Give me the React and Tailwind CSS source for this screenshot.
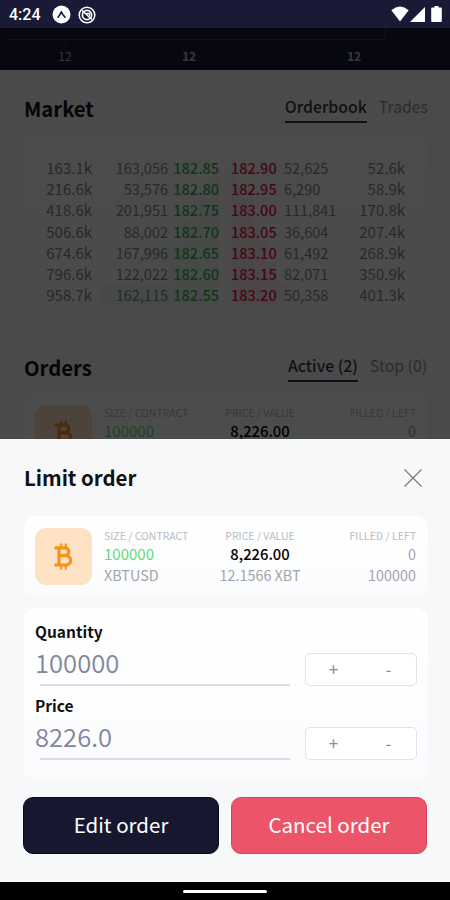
const bids = [
  ['163.1k', '163,056', '182.85', 0],
  ['216.6k', '53,576', '182.80', 8],
  ['418.6k', '201,951', '182.75', 20],
  ['506.6k', '88,002', '182.70', 38],
  ['674.6k', '167,996', '182.65', 76],
  ['796.6k', '122,022', '182.60', 50],
  ['958.7k', '162,115', '182.55', 118],
];

const asks = [
  ['182.90', '52,625', '52.6k', 4],
  ['182.95', '6,290', '58.9k', 8],
  ['183.00', '111,841', '170.8k', 22],
  ['183.05', '36,604', '207.4k', 28],
  ['183.10', '61,492', '268.9k', 36],
  ['183.15', '82,071', '350.9k', 46],
  ['183.20', '50,358', '401.3k', 54],
];

function StatusBar() {
  return (
    <div className="h-[28px] shrink-0 bg-[#191a35] flex items-center justify-between pl-[9px] pr-[8px] text-white">
      <div className="flex items-center pt-[1px]">
        <span className="font-[Roboto] font-medium text-[16px] leading-none w-[43px]">4:24</span>
        <svg className="w-[19px] h-[19px]" viewBox="0 0 19 19">
          <circle cx="9.5" cy="9.5" r="9" fill="#fff" />
          <path d="M6 12.2Q8.2 10 9.3 6.8Q10.6 10 13 12.2" fill="none" stroke="#191a35" strokeWidth="1.6" strokeLinecap="round" strokeLinejoin="round" />
        </svg>
        <svg className="w-[18px] h-[18px] ml-[7px]" viewBox="0 0 18 18" fill="none" stroke="#fff">
          <circle cx="9" cy="9" r="7.8" strokeWidth="1.5" />
          <circle cx="9" cy="9" r="4.6" strokeWidth="1.7" />
          <path d="M4 4.5L14 13.5" strokeWidth="1.6" />
          <path d="M8 7.5h3.5v2.5" strokeWidth="1.3" />
        </svg>
      </div>
      <div className="flex items-center">
        <svg className="w-[18px] h-[16px]" viewBox="0 0 18 16" fill="#fff">
          <path d="M9 15.5L0.3 4.2Q9 -3 17.7 4.2Z" />
        </svg>
        <svg className="w-[15px] h-[15px] ml-[1px]" viewBox="0 0 15 15" fill="#fff">
          <path d="M15 0V15H0Z" />
        </svg>
        <svg className="w-[11px] h-[16px] ml-[6px]" viewBox="0 0 11 16" fill="#fff">
          <path d="M3.5 0h4v1.6h2.3q1 0 1 1V15q0 1-1 1H1.2q-1 0-1-1V2.6q0-1 1-1h2.3z" />
        </svg>
      </div>
    </div>
  );
}

function ChartAxis() {
  return (
    <div className="h-[42px] bg-[#191a35] text-white/70">
      <svg className="block w-full h-[18px]" viewBox="0 0 450 18" fill="none" stroke="#3c3e54">
        <path d="M8 11.5H385.5V0M65.5 11.5v4M189.5 11.5v4M354.5 11.5v4" />
      </svg>
      <div className="flex text-[12px] leading-[19px]">
        <span className="w-[130px] shrink-0 text-center">12</span>
        <span className="w-[118px] shrink-0 text-center font-bold">12</span>
        <span className="w-[212px] shrink-0 text-center font-bold">12</span>
      </div>
    </div>
  );
}

function Tabs({ actif, autre }) {
  return (
    <div className="flex gap-[12px] text-[15.8px] leading-[24px]">
      <span className="font-medium text-[#30384a] border-b-2 border-[#30384a] h-[28px]">{actif}</span>
      <span className="text-[#8d9299]">{autre}</span>
    </div>
  );
}

function Orderbook() {
  return (
    <div className="ml-[24px] mr-[22px] h-[198px] rounded-[12px] bg-linear-to-b from-[#fdfdfe] to-[#fafafc] pt-[21px] text-[14.5px] leading-[21.2px] text-[#85878f] flex">
      <div className="w-[195px]">
        {bids.map(([total, taille, prix, profondeur]) => (
          <div key={prix} className="relative flex">
            <div className="absolute right-0 inset-y-0 bg-[#4cd964]/7" style={{ width: profondeur }} />
            <span className="w-[68px] text-right text-[15px]">{total}</span>
            <span className="w-[76px] text-right">{taille}</span>
            <span className="w-[51px] text-right font-medium text-[#35b455]">{prix}</span>
          </div>
        ))}
      </div>
      <div className="w-[174px] ml-[12px]">
        {asks.map(([prix, taille, total, profondeur]) => (
          <div key={prix} className="relative flex">
            <div className="absolute left-0 inset-y-0 bg-[#ff2d55]/7" style={{ width: profondeur }} />
            <span className="w-[53px] font-medium text-[#e8133f]">{prix}</span>
            <span className="w-[60px]">{taille}</span>
            <span className="w-[61px] text-right text-[15px]">{total}</span>
          </div>
        ))}
      </div>
    </div>
  );
}

function OrderCard({ complet }) {
  const titre = 'text-[10.5px] leading-[15px] text-[#b9bac6]';
  return (
    <div className="ml-[24px] mr-[22px] h-[80px] rounded-[12px] bg-linear-to-b from-white to-[#fbfcfe] pl-[11px] pr-[12px] pt-[12px] flex">
      <div className="w-[57px] h-[57px] shrink-0 rounded-[11px] bg-[#fde2c4] flex items-center justify-center">
        <svg className="w-[20px] h-[27px]" viewBox="0 0 20 27" fill="none" stroke="#f7931a">
          <path d="M0.5 4.9H11C16 4.9 16 12.6 11 12.6H6M11 12.6C18.6 12.6 18.6 22 11 22H0.5M5 4.9V22" strokeWidth="3.2" />
          <path d="M7.2 0.5V5M11.8 0.5V5M7.2 22V26.5M11.8 22V26.5" strokeWidth="2.1" />
        </svg>
      </div>
      <div className="flex-1 ml-[12px] grid grid-cols-3 text-[14.4px] leading-[21px] text-[#a3a4a9]">
        <div>
          <div className={titre}>SIZE / CONTRACT</div>
          <div className="text-[15px] text-[#5fdb77]">100000</div>
          {complet && <div>XBTUSD</div>}
        </div>
        <div className="text-center">
          <div className={titre}>PRICE / VALUE</div>
          <div className="text-[14.8px] font-medium text-black">8,226.00</div>
          {complet && <div>12.1566 XBT</div>}
        </div>
        <div className="text-right">
          <div className={titre}>FILLED / LEFT</div>
          <div>0</div>
          {complet && <div>100000</div>}
        </div>
      </div>
    </div>
  );
}

function Champ({ label, valeur }) {
  return (
    <div className="flex justify-between h-[74px]">
      <div className="w-[255px]">
        <div className="font-bold text-[15.5px] leading-[20px] text-[#111]">{label}</div>
        <div className="text-[25.6px] leading-[42px] font-[350] text-[#8485a0]">{valeur}</div>
        <div className="ml-[5px] mt-px h-[2px] bg-[#dcdde4]" />
      </div>
      <div className="mt-[32px] w-[112px] h-[33px] rounded-[5px] border border-[#e2e3ea] bg-white flex text-[17px] leading-[30px] text-[#8a8b99] text-center">
        <span className="flex-1">+</span>
        <span className="flex-1">-</span>
      </div>
    </div>
  );
}

export default function App() {
  return (
    <div className="w-[450px] h-[900px] flex flex-col overflow-hidden bg-[#f7f8fa] font-['Noto_Sans_CJK_SC',sans-serif] whitespace-nowrap">
      <StatusBar />
      <div className="relative h-[411px] shrink-0 overflow-hidden">
        <ChartAxis />
        <div className="flex justify-between pl-[24px] pr-[22px] pt-[25px] h-[66px]">
          <h1 className="text-[20.3px] leading-[26px] font-bold text-[#111]">Market</h1>
          <Tabs actif="Orderbook" autre="Trades" />
        </div>
        <Orderbook />
        <div className="flex justify-between pl-[24px] pr-[23px] pt-[20px] h-[59px]">
          <h1 className="text-[20.3px] leading-[26px] font-bold text-[#111]">Orders</h1>
          <Tabs actif="Active (2)" autre="Stop (0)" />
        </div>
        <OrderCard />
        <div className="absolute inset-0 bg-black/70" />
      </div>
      <div className="h-[443px] shrink-0 bg-[#f7f8fa]">
        <div className="flex justify-between items-center pl-[24px] pr-[28px] h-[77px]">
          <h2 className="text-[20.4px] leading-[26px] pb-[2px] font-bold text-[#111]">Limit order</h2>
          <svg className="w-[18px] h-[18px]" viewBox="0 0 18 18" stroke="#777" strokeWidth="1.1">
            <path d="M0.5 0.5L17.5 17.5M17.5 0.5L0.5 17.5" />
          </svg>
        </div>
        <OrderCard complet />
        <div className="ml-[24px] mr-[22px] mt-[12px] h-[172px] rounded-[12px] bg-linear-to-b from-white to-[#fbfcfe] px-[11px] pt-[13px]">
          <Champ label="Quantity" valeur="100000" />
          <Champ label="Price" valeur="8226.0" />
        </div>
        <div className="flex gap-[12px] px-[23px] mt-[17px] text-[20.5px] leading-[53px] text-center text-white">
          <button className="flex-1 h-[57px] pb-[2px] rounded-[10px] bg-[#17182f] border border-[#080920]">Edit order</button>
          <button className="flex-1 h-[57px] pb-[2px] rounded-[10px] bg-[#ec5469] border border-[#dc405b]">Cancel order</button>
        </div>
      </div>
      <div className="h-[18px] shrink-0 bg-black flex justify-center">
        <div className="mt-[8px] w-[84px] h-[3px] rounded-full bg-white" />
      </div>
    </div>
  );
}
